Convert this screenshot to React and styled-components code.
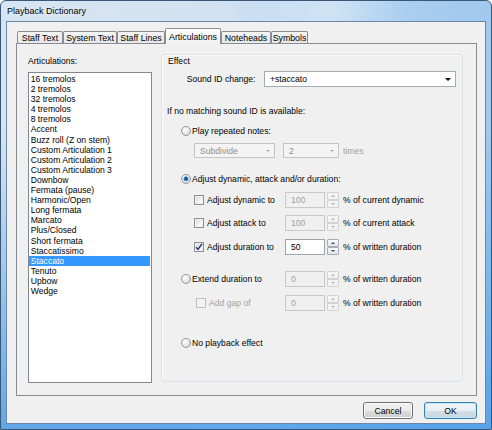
import React from "react";
import styled, { createGlobalStyle } from "styled-components";

const GlobalStyle = createGlobalStyle`
  html, body {
    margin: 0;
    padding: 0;
    background: #fff;
  }
  body {
    font-family: "Liberation Sans", Arial, sans-serif;
    font-size: 8.6px;
    color: #000;
  }
  * { box-sizing: border-box; }
`;

const Window = styled.div`
  width: 492px;
  height: 430px;
  display: flex;
  flex-direction: column;
  padding: 0 5px 5px;
  border: 1px solid #3b5777;
  border-radius: 6px 6px 0 0;
  background:
    linear-gradient(180deg, rgba(80, 158, 232, 0) 0%, rgba(80, 158, 232, 0) 30%, rgba(74, 156, 232, 0.85) 100%),
    linear-gradient(105deg, rgba(255, 255, 255, 0) 42%, rgba(255, 255, 255, 0.35) 55%, rgba(255, 255, 255, 0) 68%),
    linear-gradient(90deg, #d7e4f1 0%, #d2e2f2 45%, #aed0ef 75%, #a0c9ee 100%);
`;

const TitleBar = styled.div`
  height: 20px;
  display: flex;
  align-items: center;
  padding-left: 1px;
  font-size: 9px;
  color: #000;
  text-shadow: 0 0 5px rgba(255, 255, 255, 0.95);
`;

const Client = styled.div`
  flex: 1;
  display: flex;
  flex-direction: column;
  padding: 6px 8px 4px 9px;
  border: 1px solid #6d87a8;
  background: #f0f0f0;
`;

const TabStrip = styled.div`
  display: flex;
  align-items: flex-end;
  height: 15px;
  margin-left: 1px;
  position: relative;
  z-index: 1;
`;

const Tab = styled.div`
  width: ${(p) => p.$w}px;
  height: ${(p) => (p.$active ? 16 : 12)}px;
  margin-bottom: ${(p) => (p.$active ? -1 : 0)}px;
  display: flex;
  align-items: center;
  justify-content: center;
  border: 1px solid #898c95;
  border-bottom: none;
  border-radius: 2px 2px 0 0;
  font-size: 8.8px;
  background: ${(p) =>
    p.$active
      ? "linear-gradient(#ffffff, #f6f6f6 60%, #f0f0f0)"
      : "linear-gradient(#f4f4f4, #e6e6e6)"};
`;

const Panel = styled.div`
  height: 353px;
  display: flex;
  gap: 9px;
  padding: 10px 12px 12px 11px;
  border: 1px solid #898c95;
  background: #f0f0f0;
`;

const LeftCol = styled.div`
  display: flex;
  flex-direction: column;
  padding-top: 1px;
`;

const Caption = styled.div`
  height: 12px;
  line-height: 12px;
`;

const ListBox = styled.div`
  width: 124px;
  height: 311px;
  margin-top: 5px;
  padding-top: 1px;
  border: 1px solid #828790;
  background: #fff;
`;

const ListItem = styled.div`
  height: 10.1px;
  line-height: 10.1px;
  margin-right: 1px;
  padding-left: 1.7px;
  white-space: nowrap;
  color: ${(p) => (p.$selected ? "#fff" : "#000")};
  background: ${(p) => (p.$selected ? "#3399ff" : "transparent")};
`;

const Group = styled.div`
  width: 302px;
  height: 328px;
  display: flex;
  flex-direction: column;
  border: 1px solid #dde1e5;
  border-radius: 3px;
  box-shadow: inset 1px 1px 0 #fafafa;
`;

const Row = styled.div`
  display: flex;
  align-items: center;
  height: ${(p) => p.$h || 12}px;
  margin-top: ${(p) => p.$mt || 0}px;
  padding-left: ${(p) => p.$pl || 0}px;
  white-space: nowrap;
`;

const Cell = styled.div`
  width: ${(p) => p.$w}px;
  display: flex;
  align-items: center;
  flex-shrink: 0;
  color: ${(p) => (p.$dim ? "#a2a2a2" : "#000")};
`;

const Text = styled.span`
  margin-left: ${(p) => p.$ml || 0}px;
  color: ${(p) => (p.$dim ? "#a2a2a2" : "#000")};
`;

const RadioDot = styled.span`
  width: 10px;
  height: 10px;
  flex-shrink: 0;
  border-radius: 50%;
  border: 1px solid #979797;
  background: ${(p) =>
    p.$checked
      ? "radial-gradient(circle at 50% 48%, #0b3a66 0, #1565ad 22%, #4fa6e6 40%, rgba(255,255,255,0) 48%), radial-gradient(circle at 40% 35%, #fff, #e3e3e3 60%, #cbcbcb)"
      : "radial-gradient(circle at 40% 35%, #fff, #e6e6e6 55%, #cdcdcd)"};
`;

const CheckBox = styled.span`
  width: 10px;
  height: 10px;
  flex-shrink: 0;
  display: flex;
  align-items: center;
  justify-content: center;
  border: 1px solid ${(p) => (p.$disabled ? "#bfbfbf" : "#8e8f8f")};
  box-shadow: inset 0 0 0 1px ${(p) => (p.$disabled ? "#f4f4f4" : "#f2f2f2")};
  background: ${(p) =>
    p.$disabled ? "#f4f4f4" : "linear-gradient(135deg, #d6d6d6, #f7f7f7 70%, #ffffff)"};
`;

const Combo = styled.div`
  width: ${(p) => p.$w}px;
  height: ${(p) => p.$h}px;
  display: flex;
  align-items: center;
  flex-shrink: 0;
  margin-left: ${(p) => p.$ml || 0}px;
  padding: 0 4px 0 5px;
  border: 1px solid ${(p) => (p.$disabled ? "#c4c4c4" : "#a6abb3")};
  background: ${(p) => (p.$disabled ? "#f4f4f4" : "#fff")};
  color: ${(p) => (p.$disabled ? "#8f8f8f" : "#000")};
`;

const Arrow = styled.span`
  width: 0;
  height: 0;
  margin-left: auto;
  border-left: ${(p) => p.$s}px solid transparent;
  border-right: ${(p) => p.$s}px solid transparent;
  border-top: ${(p) => (p.$up ? 0 : p.$s)}px solid ${(p) => p.$c};
  border-bottom: ${(p) => (p.$up ? p.$s : 0)}px solid ${(p) => p.$c};
`;

const NumBox = styled.div`
  width: 40px;
  height: 16px;
  flex-shrink: 0;
  display: flex;
  align-items: center;
  padding-left: 5px;
  border: 1px solid ${(p) => (p.$disabled ? "#c9c9c9" : "#9ea3ab")};
  background: ${(p) => (p.$disabled ? "#f0f0f0" : "#fff")};
  color: ${(p) => (p.$disabled ? "#a0a0a0" : "#000")};
`;

const Spin = styled.div`
  width: 12px;
  height: 16px;
  margin-left: 2px;
  flex-shrink: 0;
  display: flex;
  flex-direction: column;
`;

const SpinHalf = styled.div`
  flex: 1;
  display: flex;
  align-items: center;
  justify-content: center;
  border: 1px solid ${(p) => (p.$disabled ? "#d2d2d2" : "#a9adb3")};
  border-radius: 1px;
  background: ${(p) =>
    p.$disabled ? "#f2f2f2" : "linear-gradient(#f7f9fb, #dfe5ec)"};

  & > span {
    margin-left: 0;
  }
`;

const Suffix = styled.span`
  margin-left: 4px;
`;

const ButtonRow = styled.div`
  display: flex;
  justify-content: flex-end;
  gap: 11px;
  margin-top: 6px;
`;

const Button = styled.button`
  width: ${(p) => p.$w}px;
  height: 17px;
  padding: 0;
  font-family: "Liberation Sans", Arial, sans-serif;
  font-size: 8.6px;
  color: #000;
  border-radius: 3px;
  border: 1px solid ${(p) => (p.$default ? "#3c7fb1" : "#707070")};
  box-shadow: inset 0 0 0 1px ${(p) => (p.$default ? "#bde7fb" : "#fbfbfb")};
  background: ${(p) =>
    p.$default
      ? "linear-gradient(#f1f5f8 0%, #e7eef3 50%, #d5e0e8 50%, #c9d6e0 100%)"
      : "linear-gradient(#f2f2f2 0%, #ebebeb 50%, #dddddd 50%, #cfcfcf 100%)"};
`;

const articulations = [
  "16 tremolos",
  "2 tremolos",
  "32 tremolos",
  "4 tremolos",
  "8 tremolos",
  "Accent",
  "Buzz roll (Z on stem)",
  "Custom Articulation 1",
  "Custom Articulation 2",
  "Custom Articulation 3",
  "Downbow",
  "Fermata (pause)",
  "Harmonic/Open",
  "Long fermata",
  "Marcato",
  "Plus/Closed",
  "Short fermata",
  "Staccatissimo",
  "Staccato",
  "Tenuto",
  "Upbow",
  "Wedge",
];

const tabs = [
  { label: "Staff Text", w: 46 },
  { label: "System Text", w: 54 },
  { label: "Staff Lines", w: 48 },
  { label: "Articulations", w: 56, active: true },
  { label: "Noteheads", w: 50 },
  { label: "Symbols", w: 37 },
];

function Check() {
  return (
    <svg width="8" height="8" viewBox="0 0 8 8">
      <path d="M1 4.2 L3 6.4 L7 0.8" fill="none" stroke="#253c8c" strokeWidth="1.5" />
    </svg>
  );
}

function Spinner({ disabled }) {
  const c = disabled ? "#b8b8b8" : "#3d4a5c";
  return (
    <Spin>
      <SpinHalf $disabled={disabled}>
        <Arrow $s={2} $c={c} $up />
      </SpinHalf>
      <SpinHalf $disabled={disabled}>
        <Arrow $s={2} $c={c} />
      </SpinHalf>
    </Spin>
  );
}

function Percent({ value, disabled, suffix }) {
  return (
    <>
      <NumBox $disabled={disabled}>{value}</NumBox>
      <Spinner disabled={disabled} />
      <Suffix>{suffix}</Suffix>
    </>
  );
}

export default function App() {
  return (
    <>
      <GlobalStyle />
      <Window>
        <TitleBar>Playback Dictionary</TitleBar>
        <Client>
          <TabStrip>
            {tabs.map((t) => (
              <Tab key={t.label} $w={t.w} $active={t.active}>
                {t.label}
              </Tab>
            ))}
          </TabStrip>
          <Panel>
            <LeftCol>
              <Caption>Articulations:</Caption>
              <ListBox>
                {articulations.map((a) => (
                  <ListItem key={a} $selected={a === "Staccato"}>
                    {a}
                  </ListItem>
                ))}
              </ListBox>
            </LeftCol>

            <Group>
              <Row $pl={6}>Effect</Row>

              <Row $h={16} $mt={4} $pl={24.7}>
                <Cell $w={77.3}>Sound ID change:</Cell>
                <Combo $w={192} $h={16}>
                  +staccato
                  <Arrow $s={3.5} $c="#000" />
                </Combo>
              </Row>

              <Row $mt={18} $pl={5}>
                If no matching sound ID is available:
              </Row>

              <Row $mt={8} $pl={18.7}>
                <RadioDot />
                <Text $ml={1.3}>Play repeated notes:</Text>
              </Row>

              <Row $h={15} $mt={6} $pl={32}>
                <Combo $w={81} $h={15} $disabled>
                  Subdivide
                  <Arrow $s={2.5} $c="#a8a8a8" />
                </Combo>
                <Combo $w={56} $h={15} $ml={8} $disabled>
                  2
                  <Arrow $s={2.5} $c="#a8a8a8" />
                </Combo>
                <Text $ml={4} $dim>
                  times
                </Text>
              </Row>

              <Row $mt={15} $pl={18.7}>
                <RadioDot $checked />
                <Text $ml={1.3}>Adjust dynamic, attack and/or duration:</Text>
              </Row>

              <Row $h={16} $mt={7} $pl={32}>
                <Cell $w={91}>
                  <CheckBox />
                  <Text $ml={3}>Adjust dynamic to</Text>
                </Cell>
                <Percent value="100" disabled suffix="% of current dynamic" />
              </Row>

              <Row $h={16} $mt={7} $pl={32}>
                <Cell $w={91}>
                  <CheckBox />
                  <Text $ml={3}>Adjust attack to</Text>
                </Cell>
                <Percent value="100" disabled suffix="% of current attack" />
              </Row>

              <Row $h={16} $mt={8} $pl={32}>
                <Cell $w={91}>
                  <CheckBox>
                    <Check />
                  </CheckBox>
                  <Text $ml={3}>Adjust duration to</Text>
                </Cell>
                <Percent value="50" suffix="% of written duration" />
              </Row>

              <Row $h={16} $mt={16} $pl={18.7}>
                <Cell $w={104.3}>
                  <RadioDot />
                  <Text $ml={1.3}>Extend duration to</Text>
                </Cell>
                <Percent value="0" disabled suffix="% of written duration" />
              </Row>

              <Row $h={16} $mt={8} $pl={34}>
                <Cell $w={89}>
                  <CheckBox $disabled />
                  <Text $ml={3} $dim>
                    Add gap of
                  </Text>
                </Cell>
                <Percent value="0" disabled suffix="% of written duration" />
              </Row>

              <Row $mt={26} $pl={18.7}>
                <RadioDot />
                <Text $ml={1.3}>No playback effect</Text>
              </Row>
            </Group>
          </Panel>
          <ButtonRow>
            <Button $w={50}>Cancel</Button>
            <Button $w={53} $default>
              OK
            </Button>
          </ButtonRow>
        </Client>
      </Window>
    </>
  );
}
